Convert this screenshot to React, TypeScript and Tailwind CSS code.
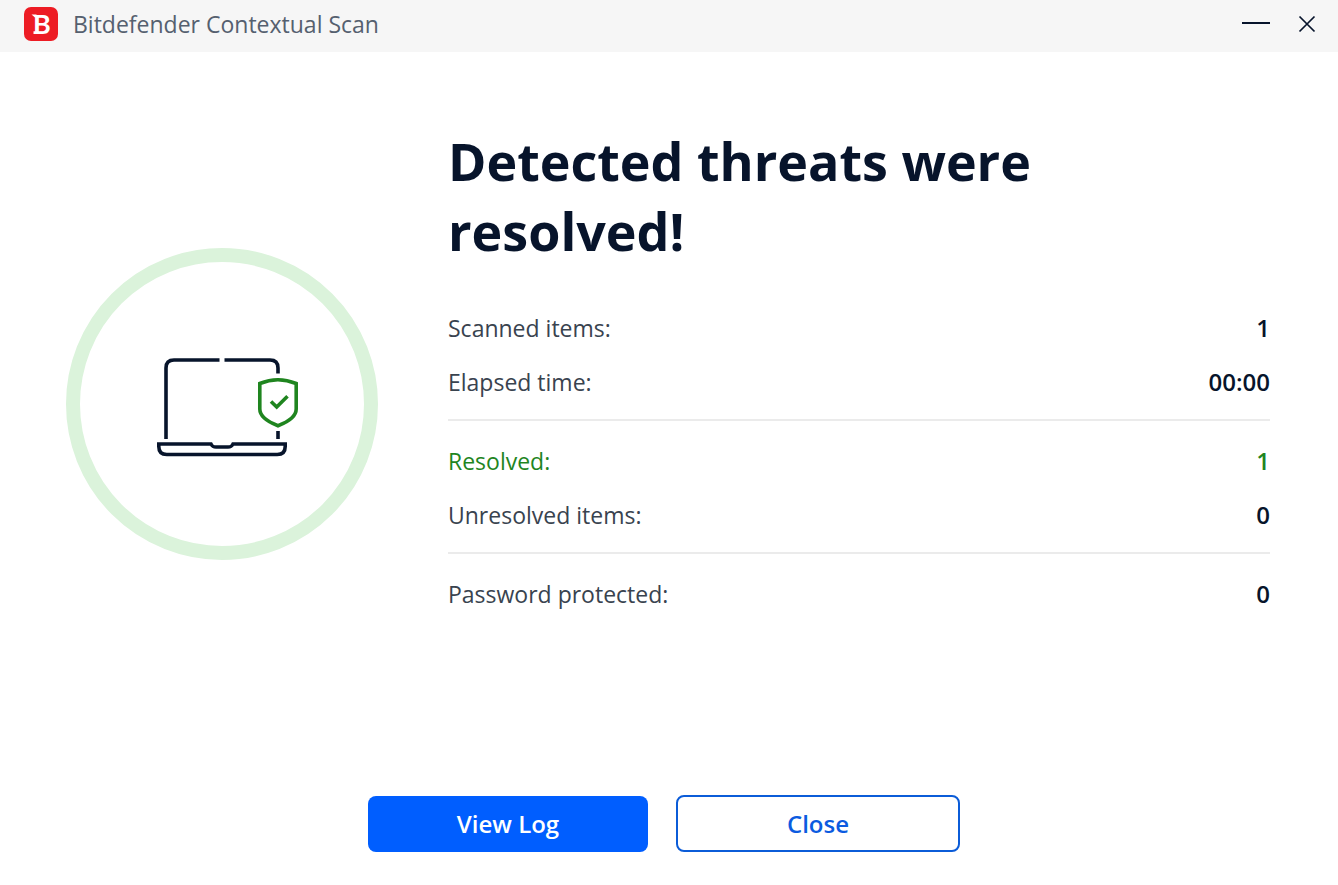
import React from 'react'

type Row = {
  label: string
  value: string
  resolved?: boolean
}

const groups: Row[][] = [
  [
    { label: 'Scanned items:', value: '1' },
    { label: 'Elapsed time:', value: '00:00' },
  ],
  [
    { label: 'Resolved:', value: '1', resolved: true },
    { label: 'Unresolved items:', value: '0' },
  ],
  [{ label: 'Password protected:', value: '0' }],
]

function Logo() {
  return (
    <svg width="34" height="34" viewBox="0 0 34 34" aria-hidden="true">
      <rect width="34" height="34" rx="7" fill="#ed1c24" />
      {/* spur and foot on the left of the stem */}
      <path d="M7.500 7.600h5v3h-1.500zM9.500 24.300h3v2.700h-3z" fill="#fff" />
      <text x="9" y="27" fill="#fff" className="font-['Lato',sans-serif] text-[27px] font-bold">
        B
      </text>
    </svg>
  )
}

function TitleBar() {
  return (
    <header className="flex h-[52px] items-center bg-[#f6f6f6] pr-[22px] pb-[4px] pl-[24px]">
      <Logo />
      <span className="ml-[15px] text-[23px] leading-[32px] text-[#55606f]">Bitdefender Contextual Scan</span>
      <div className="ml-auto flex items-center gap-[26px]">
        <button type="button" aria-label="Minimize">
          <svg width="28" height="18" viewBox="0 0 28 18" stroke="#07142b" strokeWidth="2">
            <path d="M0 8h28" />
          </svg>
        </button>
        <button type="button" aria-label="Close window">
          <svg width="20" height="18" viewBox="0 0 20 18" stroke="#07142b" strokeWidth="1.7">
            <path d="M3.500 1.500l15 15M18.500 1.500l-15 15" />
          </svg>
        </button>
      </div>
    </header>
  )
}

function StatusRing() {
  return (
    <svg className="shrink-0" width="312" height="312" viewBox="66 248 312 312" fill="none" aria-hidden="true">
      <circle cx="222" cy="404" r="149" stroke="#dbf3db" strokeWidth="14" />
      {/* laptop */}
      <g stroke="#07142b" strokeWidth="3.6">
        <path d="M166 439V368q0-8 8-8h45.500" />
        <path d="M224.500 360H270q8 0 8 8v5.500" />
        <path d="M278 431v8" />
        <path d="M158.800 444H211c1.500 2.800 2.500 3 5 3h12c2.500 0 3.500-.2 5-3h52.200v2.500q0 8-8 8h-110.400q-8 0-8-8z" />
      </g>
      {/* shield */}
      <g stroke="#1f851f" strokeWidth="3.6">
        <path d="M259.800 383.500q18-7.500 36.400 0v25.500c0 7.500-9 13.200-18.200 16.700-9.200-3.500-18.200-9.200-18.200-16.700z" />
        <path d="M271 401.500l5.700 5.500 10.800-10.800" />
      </g>
    </svg>
  )
}

function App() {
  return (
    <div className="flex min-h-screen flex-col bg-white font-['Open_Sans','Noto_Sans',sans-serif] text-[#07142b]">
      <TitleBar />
      <main className="flex items-start gap-[70px] pt-[74px] pr-[68px] pl-[66px]">
        <div className="shrink-0 pt-[122px]">
          <StatusRing />
        </div>
        <div className="min-w-0 flex-1">
          <h1 className="max-w-[640px] text-[52px] leading-[70px] font-bold">Detected threats were resolved!</h1>
          <div className="mt-[35px]">
            {groups.map((rows, i) => (
              <dl key={i} className="border-[#ebebeb] not-first:pt-[13px] not-last:border-b-2 not-last:pb-[10px]">
                {rows.map((row) => (
                  <div
                    key={row.label}
                    className={`flex h-[54px] items-center justify-between ${row.resolved ? 'text-[#1f851f]' : ''}`}
                  >
                    <dt className={`text-[23px] ${row.resolved ? '' : 'text-[#39434f]'}`}>{row.label}</dt>
                    <dd className="text-[24px] font-semibold">{row.value}</dd>
                  </div>
                ))}
              </dl>
            ))}
          </div>
        </div>
      </main>
      <footer className="mt-auto flex items-end justify-center gap-7 pr-[10px] pb-[33px] text-[24px] font-semibold">
        <button type="button" className="h-[56px] w-[280px] rounded-lg bg-[#005eff] text-white">
          View Log
        </button>
        <button type="button" className="h-[57px] w-[284px] rounded-lg border-2 border-[#0b5cd8] text-[#0b5be0]">
          Close
        </button>
      </footer>
    </div>
  )
}

export default App
